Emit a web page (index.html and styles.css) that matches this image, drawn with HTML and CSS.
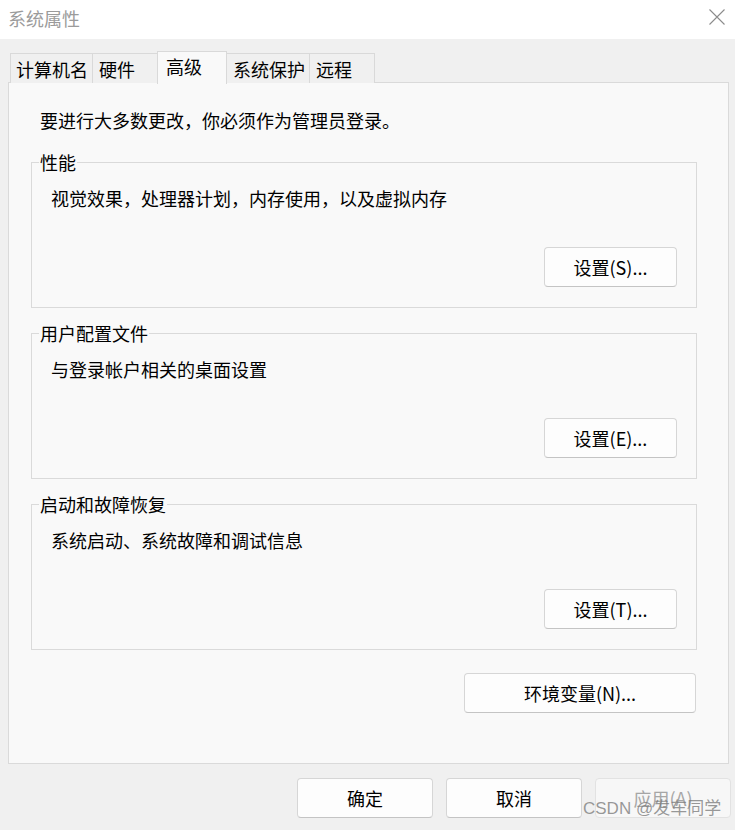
FILE: index.html
```html
<!DOCTYPE html>
<html lang="zh-CN">
<head>
<meta charset="utf-8">
<title>系统属性</title>
<link rel="stylesheet" href="styles.css">
</head>
<body>
<div class="window">
  <div class="titlebar">
    <span class="title">系统属性</span>
    <span class="close">
      <svg width="16" height="16" viewBox="0 0 16 16"><path d="M0.5 0.5 L15.5 15.5 M15.5 0.5 L0.5 15.5" stroke="#8c8c8c" stroke-width="1.1" fill="none"/></svg>
    </span>
  </div>
  <div class="tabs">
    <div class="tab">计算机名</div>
    <div class="tab">硬件</div>
    <div class="tab active">高级</div>
    <div class="tab">系统保护</div>
    <div class="tab">远程</div>
  </div>
  <div class="panel">
    <p class="intro">要进行大多数更改，你必须作为管理员登录。</p>
    <fieldset class="group first">
      <legend>性能</legend>
      <div class="group-body">
        <p class="desc">视觉效果，处理器计划，内存使用，以及虚拟内存</p>
        <div class="row"><button class="btn set">设置(S)...</button></div>
      </div>
    </fieldset>
    <fieldset class="group">
      <legend>用户配置文件</legend>
      <div class="group-body">
        <p class="desc">与登录帐户相关的桌面设置</p>
        <div class="row"><button class="btn set">设置(E)...</button></div>
      </div>
    </fieldset>
    <fieldset class="group">
      <legend>启动和故障恢复</legend>
      <div class="group-body">
        <p class="desc">系统启动、系统故障和调试信息</p>
        <div class="row"><button class="btn set">设置(T)...</button></div>
      </div>
    </fieldset>
    <button class="btn env">环境变量(N)...</button>
  </div>
  <div class="footer">
    <button class="btn foot">确定</button>
    <button class="btn foot">取消</button>
    <button class="btn foot disabled">应用(A)</button>
  </div>
  <div class="watermark">CSDN @发车同学</div>
</div>
</body>
</html>
```
FILE: styles.css
```css
* { box-sizing: border-box; }
html, body {
  margin: 0;
  padding: 0;
}
body {
  width: 735px;
  height: 830px;
  background: #f0f0f0;
  font-family: "Noto Sans CJK SC", "Microsoft YaHei", sans-serif;
  font-size: 18px;
  color: #000;
  overflow: hidden;
}
.window {
  position: relative;
  width: 735px;
  height: 830px;
  background: #f0f0f0;
}
.titlebar {
  height: 39px;
  background: #fff;
  display: flex;
  align-items: center;
  justify-content: space-between;
  padding: 0 10px 0 8px;
}
.title {
  color: #9b9b9b;
  font-size: 18px;
  line-height: 24px;
  margin-top: -4px;
}
.close {
  display: flex;
  margin-top: -6px;
}
.tabs {
  display: flex;
  align-items: flex-end;
  height: 32px;
  margin: 12px 0 -1px 10px;
}
.tab {
  height: 30px;
  min-width: 65px;
  padding: 0 4px 0 6px;
  border: 1px solid #d9d9d9;
  border-bottom: none;
  border-left: none;
  background: #f0f0f0;
  line-height: 30px;
  white-space: nowrap;
}
.tab:first-child {
  border-left: 1px solid #d9d9d9;
  padding-left: 5px;
}
.tab.active {
  position: relative;
  z-index: 1;
  height: 33px;
  min-width: 70px;
  margin: 0 0 -1px -1px;
  padding-left: 8px;
  border-left: 1px solid #d9d9d9;
  background: #f9f9f9;
  line-height: 28px;
}
.panel {
  margin: 0 6px 0 8px;
  height: 682px;
  background: #f9f9f9;
  border: 1px solid #dadada;
  padding: 25px 31px 0 22px;
  display: flex;
  flex-direction: column;
}
.intro {
  margin: 0 0 0 9px;
  line-height: 24px;
}
.group {
  margin: 13px 0 0 0;
  padding: 0;
  border: 1px solid #dadada;
  min-width: 0;
}
.group.first { margin-top: 18px; }
.group legend {
  margin-left: 7px;
  padding: 0 1px;
  line-height: 24px;
}
.group-body {
  padding: 12px 19px 20px 19px;
}
.desc {
  margin: 0;
  line-height: 24px;
}
.row {
  display: flex;
  justify-content: flex-end;
  margin-top: 37px;
}
.btn {
  font-family: inherit;
  font-size: 18px;
  color: #000;
  height: 40px;
  background: #fdfdfd;
  border: 1px solid #d6d6d6;
  border-bottom-color: #c4c4c4;
  border-radius: 4px;
  padding: 0;
  line-height: 36px;
}
.btn.set { width: 133px; }
.btn.env {
  width: 232px;
  align-self: flex-end;
  margin-top: 23px;
  margin-right: 1px;
}
.footer {
  display: flex;
  justify-content: flex-end;
  gap: 13px;
  margin-top: 14px;
  padding-right: 4px;
}
.btn.foot { width: 136px; }
.btn.disabled {
  background: #f7f7f7;
  border-color: #e2e2e2;
  color: #a6a6a6;
}
.watermark {
  position: absolute;
  left: 583px;
  top: 797px;
  font-family: "Liberation Sans", "Noto Sans CJK SC", sans-serif;
  font-size: 17px;
  line-height: 24px;
  color: rgba(120, 120, 120, 0.75);
  white-space: nowrap;
}
```
